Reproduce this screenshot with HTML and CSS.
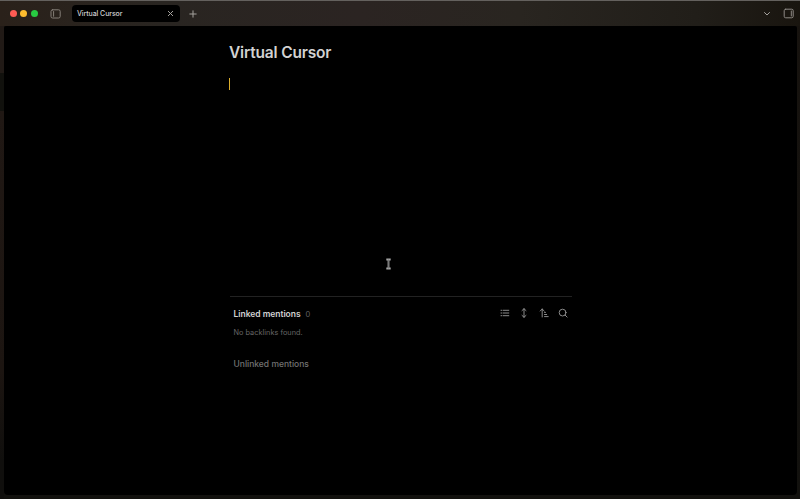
FILE: index.html
```html
<!DOCTYPE html>
<html lang="en">
<head>
<meta charset="utf-8">
<title>Virtual Cursor</title>
<link rel="stylesheet" href="styles.css">
</head>
<body>
<div class="window">
  <header class="titlebar">
    <div class="lights"><i class="red"></i><i class="yellow"></i><i class="green"></i></div>
    <svg class="side-left" width="12" height="10" viewBox="0 0 12 10"><rect x="1" y=".8" width="9.2" height="8.2" rx="1.6"/><path d="M3.6 2.5v4.8"/></svg>
    <div class="tab"><span class="tab-name">Virtual Cursor</span><svg width="7" height="7" viewBox="0 0 7 7"><path d="M1.3 1.3l4.4 4.4M5.7 1.3L1.3 5.7"/></svg></div>
    <svg class="add" width="8" height="8" viewBox="0 0 8 8"><path d="M4 .8v6.4M.8 4h6.4"/></svg>
    <svg class="chevron" width="8" height="6" viewBox="0 0 8 6"><path d="M1.5 1.5L4 4l2.5-2.5"/></svg>
    <svg class="side-right" width="12" height="11" viewBox="0 0 12 11"><rect x="1.2" y="1.2" width="9" height="8.6" rx="1.5"/><path d="M8.3 3v5"/></svg>
  </header>
  <main class="page">
    <article class="note">
      <h1>Virtual Cursor</h1>
      <div class="caret"></div>
    </article>
    <section class="backlinks">
      <div class="section-head">
        <h2>Linked mentions</h2><span class="count">0</span>
        <div class="tools">
          <svg width="10" height="10" viewBox="0 0 10 10"><path d="M3.4 2.3h5.4M3.4 5h5.4M3.4 7.7h5.4M1 2.3h1M1 5h1M1 7.7h1"/></svg>
          <svg width="10" height="10" viewBox="0 0 10 10"><path d="M5 .7v8.6M3 2.6L5 .7l2 1.9M3 7.4l2 1.9 2-1.9"/></svg>
          <svg width="10" height="10" viewBox="0 0 10 10"><path d="M3.2 1v8M1.2 3l2-2 2 2M5.5 4.4h1M5.5 6.5h2.2M5.5 8.6h3.7"/></svg>
          <svg width="10" height="10" viewBox="0 0 10 10"><circle cx="4.6" cy="4.6" r="3.4"/><path d="M7.1 7.1l2 2"/></svg>
        </div>
      </div>
      <p class="empty">No backlinks found.</p>
      <h2 class="unlinked">Unlinked mentions</h2>
    </section>
  </main>
  <svg class="pointer" width="7" height="12" viewBox="0 0 7 12"><path class="outline" d="M1.3 1.5h4.4M3.5 1.5v9M1.3 10.5h4.4"/><path class="core" d="M3.5 2v8"/></svg>
</div>
</body>
</html>
```
FILE: styles.css
```css
* { box-sizing: border-box; margin: 0; padding: 0; }
body { width: 800px; height: 499px; overflow: hidden; background: #0d0c0a; font-family: Inter, "Liberation Sans", sans-serif; }
.window {
  position: relative; height: 499px; padding: 0 3px 4px 4px; border-top: 1px solid #64615e;
  background: linear-gradient(90deg, #2a211a 0, #292521 20%, #2b2422 45%, #292520 65%, #211e19 87%, #19150f 100%) 0 0 / 100% 25px no-repeat,
    linear-gradient(#211a16 0, #211a16 72px, #11110d 72px, #11110d 110px, #201814 110px, #1c1511 370px, #100f0d 460px) 0 0 / 4px 100% no-repeat,
    linear-gradient(#17130f, #12110e);
}
svg { flex: none; fill: none; stroke: #a5a29e; stroke-width: 1; stroke-linecap: round; stroke-linejoin: round; }
.titlebar { height: 25px; display: flex; align-items: center; padding: 0 2px 0 5.7px; }
.lights { display: flex; gap: 3.8px; }
.lights i { width: 7px; height: 7px; border-radius: 50%; }
.red { background: #ff5b54; }
.yellow { background: #fdbc2e; }
.green { background: #28ca42; }
.side-left { margin-left: 11.7px; stroke: #857f78; }
.tab { width: 108px; height: 17px; margin-left: 10px; padding: 0 6px 0 5px; border-radius: 4px; background: #000; display: flex; align-items: center; justify-content: space-between; }
.tab-name { font-size: 7px; font-weight: 500; letter-spacing: -.08px; color: #d0d0d0; white-space: nowrap; }
.add { margin-left: 9px; }
.chevron { margin-left: auto; }
.side-right { margin-left: 12px; stroke: #8d8984; }
.page { height: 469px; padding: 17px 225px 0; border-radius: 2px 2px 4px 4px; background: #000; }
.note { height: 253px; }
h1 { height: 20px; line-height: 20px; font-size: 15.5px; font-weight: 600; letter-spacing: -.18px; color: #d2d2d2; white-space: nowrap; }
.caret { width: 1px; height: 12px; margin-top: 15px; background: #dcae2c; }
.backlinks { width: 342px; margin-left: 1px; border-top: 1px solid #222; padding: 11px 4px 0 3.5px; }
.section-head { height: 12px; display: flex; align-items: center; }
h2 { font-size: 8.5px; line-height: 12px; font-weight: 600; letter-spacing: -.03px; color: #d2d2d2; white-space: nowrap; }
.count { margin-left: 5px; font-size: 7.5px; color: #606060; }
.tools { margin: -2px 0 0 auto; display: flex; gap: 9.3px; }
.tools svg { stroke: #9a9a9a; stroke-width: .9; }
.empty { margin-top: 7px; font-size: 7.3px; line-height: 11px; letter-spacing: .03px; color: #666; white-space: nowrap; }
.unlinked { margin-top: 20px; font-weight: 500; letter-spacing: 0; color: #737373; }
.pointer { position: absolute; left: 385px; top: 257px; }
.outline { stroke: #a5a5a5; stroke-width: 1.8; stroke-linecap: butt; }
.core { stroke: #656565; stroke-width: .7; }
```
